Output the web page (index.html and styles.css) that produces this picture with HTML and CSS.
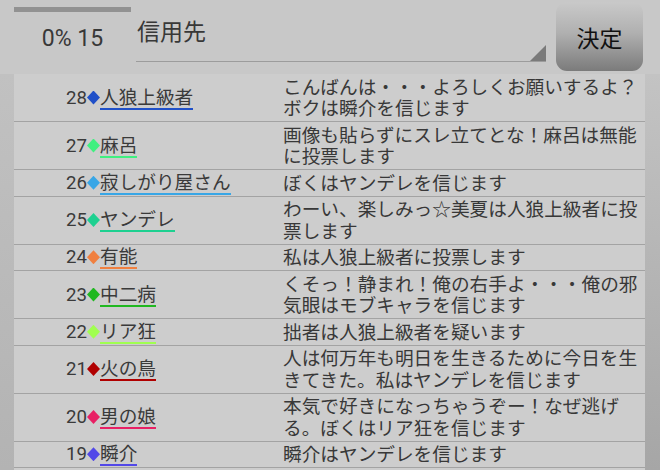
FILE: index.html
```html
<!DOCTYPE html>
<html lang="ja">
<head>
<meta charset="utf-8">
<title>投票</title>
<link rel="stylesheet" href="styles.css">
</head>
<body>
<div class="screen">
  <header class="top">
    <div class="status">
      <div class="progress"></div>
      <div class="count">0% 15</div>
    </div>
    <div class="spinner">
      <span class="spinner-label">信用先</span>
      <span class="spinner-arrow"></span>
    </div>
    <button class="decide">決定</button>
  </header>
  <main class="content">
    <ul class="log">
      <li class="row c28">
        <div class="who"><div class="tag"><span class="num">28</span><span class="dia"></span><span class="name">人狼上級者</span></div></div>
        <div class="msg">こんばんは・・・よろしくお願いするよ？ボクは瞬介を信じます</div>
      </li>
      <li class="row c27">
        <div class="who"><div class="tag"><span class="num">27</span><span class="dia"></span><span class="name">麻呂</span></div></div>
        <div class="msg">画像も貼らずにスレ立てとな！麻呂は無能に投票します</div>
      </li>
      <li class="row c26">
        <div class="who"><div class="tag"><span class="num">26</span><span class="dia"></span><span class="name">寂しがり屋さん</span></div></div>
        <div class="msg">ぼくはヤンデレを信じます</div>
      </li>
      <li class="row c25">
        <div class="who"><div class="tag"><span class="num">25</span><span class="dia"></span><span class="name">ヤンデレ</span></div></div>
        <div class="msg">わーい、楽しみっ☆美夏は人狼上級者に投票します</div>
      </li>
      <li class="row c24">
        <div class="who"><div class="tag"><span class="num">24</span><span class="dia"></span><span class="name">有能</span></div></div>
        <div class="msg">私は人狼上級者に投票します</div>
      </li>
      <li class="row c23">
        <div class="who"><div class="tag"><span class="num">23</span><span class="dia"></span><span class="name">中二病</span></div></div>
        <div class="msg">くそっ！静まれ！俺の右手よ・・・俺の邪気眼はモブキャラを信じます</div>
      </li>
      <li class="row c22">
        <div class="who"><div class="tag"><span class="num">22</span><span class="dia"></span><span class="name">リア狂</span></div></div>
        <div class="msg">拙者は人狼上級者を疑います</div>
      </li>
      <li class="row c21">
        <div class="who"><div class="tag"><span class="num">21</span><span class="dia"></span><span class="name">火の鳥</span></div></div>
        <div class="msg">人は何万年も明日を生きるために今日を生きてきた。私はヤンデレを信じます</div>
      </li>
      <li class="row c20">
        <div class="who"><div class="tag"><span class="num">20</span><span class="dia"></span><span class="name">男の娘</span></div></div>
        <div class="msg">本気で好きになっちゃうぞー！なぜ逃げる。ぼくはリア狂を信じます</div>
      </li>
      <li class="row c19">
        <div class="who"><div class="tag"><span class="num">19</span><span class="dia"></span><span class="name">瞬介</span></div></div>
        <div class="msg">瞬介はヤンデレを信じます</div>
      </li>
    </ul>
  </main>
</div>
</body>
</html>
```

FILE: styles.css
```css
html, body {
  margin: 0;
  padding: 0;
}

body {
  width: 660px;
  height: 470px;
  overflow: hidden;
  background: #c8c8c8;
  font-family: Roboto, "Noto Sans CJK JP", sans-serif;
  color: #383838;
}

.screen {
  display: flex;
  flex-direction: column;
  height: 470px;
}

/* ---------- header ---------- */
.top {
  display: flex;
  height: 74px;
  flex: none;
  padding-left: 14px;
  box-sizing: border-box;
}

.status {
  width: 117px;
  display: flex;
  flex-direction: column;
  align-items: center;
}

.progress {
  align-self: stretch;
  height: 5px;
  margin-top: 7px;
  background: #929292;
}

.count {
  font-size: 23px;
  line-height: 27px;
  margin-top: 13px;
}

.spinner {
  position: relative;
  width: 410px;
  height: 61px;
  margin-left: 5px;
  border-bottom: 1.5px solid #9c9c9c;
}

.spinner-label {
  display: block;
  padding-left: 1px;
  padding-top: 18px;
  font-size: 23px;
  line-height: 30px;
}

.spinner-arrow {
  position: absolute;
  right: 0;
  bottom: 0;
  width: 16px;
  height: 16px;
  background: #7a7a7a;
  clip-path: polygon(100% 0, 100% 100%, 0 100%);
}

.decide {
  width: 87px;
  height: 69px;
  margin: 2px 0 0 10px;
  padding: 0;
  border: 0;
  border-radius: 11px;
  background: linear-gradient(#c9c9c9 0%, #b0b0b0 45%, #7b7b7b 100%);
  font-family: Roboto, "Noto Sans CJK JP", sans-serif;
  font-size: 23px;
  color: #111;
}

/* ---------- list ---------- */
.content {
  position: relative;
  flex: 1;
  display: flex;
  padding: 0 15px 0 14px;
  background: linear-gradient(#c1c1c1, #b3b3b3);
}

/* darker strip along the right edge */
.content::after {
  content: "";
  position: absolute;
  top: 0;
  right: 0;
  bottom: 0;
  width: 15px;
  background: linear-gradient(#c3c3c3, #a6a6a6);
}

.log {
  flex: 1;
  list-style: none;
  margin: 0;
  padding: 0;
  background: #cdcdcd;
}

.row {
  display: grid;
  grid-template-columns: 269px 1fr;
  border-bottom: 1px solid #a3a3a3;
}

.who {
  display: flex;
  align-items: center;
  padding-left: 52px;
  padding-top: 2px;
  font-size: 18.67px;
}

.tag {
  line-height: 20px;
  white-space: nowrap;
}

.num,
.name {
  color: #3a3a3a;
}

.dia {
  display: inline-block;
  width: 13px;
  height: 14px;
  vertical-align: -1px;
  clip-path: polygon(50% 0, 100% 50%, 50% 100%, 0 50%);
  background: var(--c);
}

.name {
  display: inline-block;
  border-bottom: 2px solid var(--c);
}

.msg {
  font-size: 18.67px;
  line-height: 21.5px;
  padding: 3.5px 6px 0.5px 0;
}

.c28 { --c: #2050c8; }
.c27 { --c: #40f080; }
.c26 { --c: #38a6e6; }
.c25 { --c: #1ed090; }
.c24 { --c: #f08040; }
.c23 { --c: #20b820; }
.c22 { --c: #a0ff50; }
.c21 { --c: #b00000; }
.c20 { --c: #e82064; }
.c19 { --c: #5248e8; }
```
